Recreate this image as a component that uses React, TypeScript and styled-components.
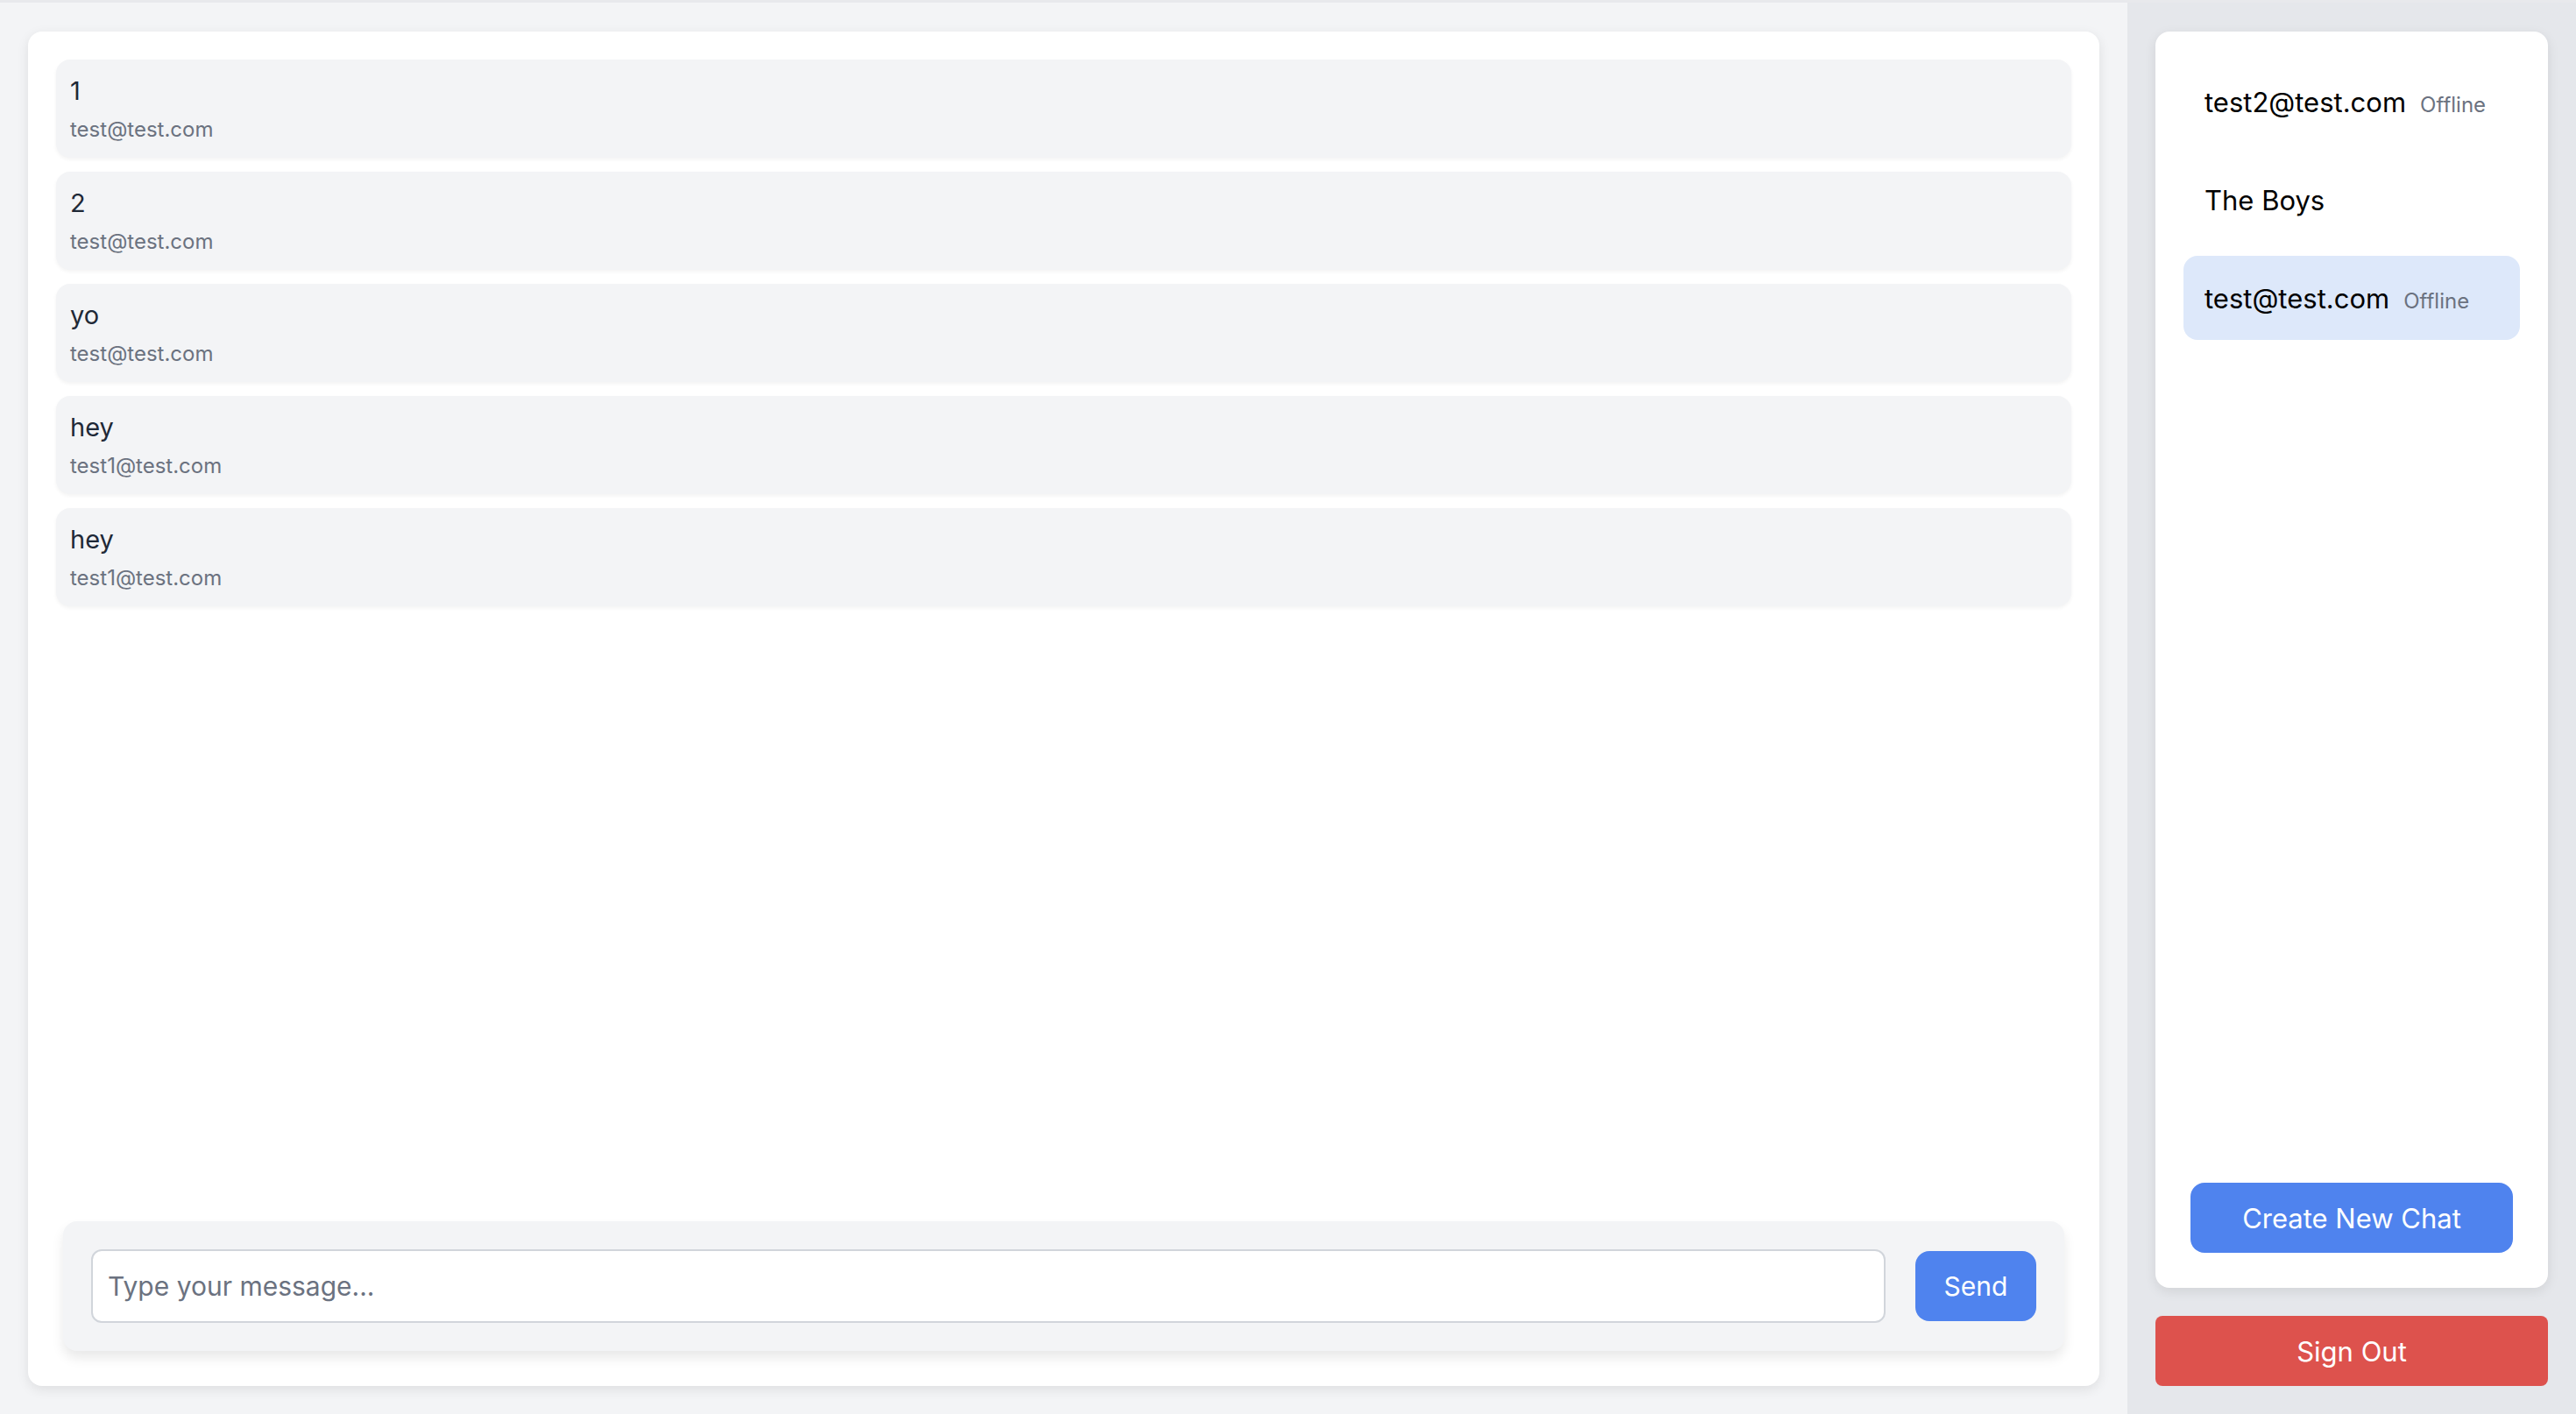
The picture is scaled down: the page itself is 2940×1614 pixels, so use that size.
import React from "react";
import { createGlobalStyle, styled } from "styled-components";

const GlobalStyle = createGlobalStyle`
  html, body {
    margin: 0;
    padding: 0;
  }
  body {
    font-family: Inter, "Noto Sans", "Liberation Sans", sans-serif;
    background-color: #f3f4f6;
  }
  * {
    box-sizing: border-box;
  }
`;

const Layout = styled.div`
  border-top: 3px solid #e8e9ec;
  display: flex;
  height: 100vh;
  width: 100vw;
`;

const MainArea = styled.main`
  background-color: #f3f4f6;
  display: flex;
  flex: 1;
  padding: 33px 32px 32px;
`;

const ChatCard = styled.section`
  background-color: #ffffff;
  border-radius: 16px;
  box-shadow: 0 4px 14px rgba(0, 0, 0, 0.09);
  display: flex;
  flex: 1;
  flex-direction: column;
  padding: 32px;
`;

const MessageList = styled.div`
  display: flex;
  flex: 1;
  flex-direction: column;
  gap: 16px;
`;

const MessageItem = styled.div`
  background-color: #f3f4f6;
  border-radius: 16px;
  box-shadow: 0 2px 4px rgba(0, 0, 0, 0.05);
  display: flex;
  flex-direction: column;
  padding: 16px;
`;

const MessageText = styled.span`
  color: #1f2937;
  font-size: 29px;
  line-height: 40px;
`;

const MessageSender = styled.span`
  color: #6b7280;
  font-size: 24px;
  line-height: 32px;
  margin-top: 8px;
`;

const Composer = styled.form`
  align-items: center;
  background-color: #f3f4f6;
  border-radius: 16px;
  box-shadow: 0 8px 14px rgba(0, 0, 0, 0.09);
  display: flex;
  gap: 34px;
  margin: 8px;
  padding: 32px;
`;

const MessageInput = styled.input`
  background-color: #ffffff;
  border: 2px solid #d1d5db;
  border-radius: 12px;
  color: #1f2937;
  flex: 1;
  font-family: inherit;
  font-size: 30px;
  height: 84px;
  outline: none;
  padding: 0 17px;

  &::placeholder {
    color: #6b7280;
  }
`;

const Button = styled.button<{ $tone: "blue" | "red"; $radius?: number }>`
  background-color: ${(p) => (p.$tone === "blue" ? "#4f83ee" : "#dd524d")};
  border: none;
  border-radius: ${(p) => p.$radius ?? 16}px;
  color: #ffffff;
  cursor: pointer;
  font-family: inherit;
  font-size: 31px;
  height: 80px;
`;

const SendButton = styled(Button)`
  font-size: 30px;
  width: 138px;
`;

const Sidebar = styled.aside`
  background-color: #e5e7eb;
  display: flex;
  flex-direction: column;
  gap: 32px;
  padding: 33px 32px 32px;
  width: 512px;
`;

const ChatListCard = styled.div`
  background-color: #ffffff;
  border-radius: 16px;
  box-shadow: 0 4px 14px rgba(0, 0, 0, 0.09);
  display: flex;
  flex: 1;
  flex-direction: column;
  padding: 32px;
`;

const ChatList = styled.div`
  display: flex;
  flex: 1;
  flex-direction: column;
  gap: 16px;
`;

const ChatRow = styled.div<{ $active?: boolean }>`
  align-items: baseline;
  background-color: ${(p) => (p.$active ? "#dde8fa" : "transparent")};
  border-radius: 16px;
  display: flex;
  gap: 16px;
  height: 96px;
  padding: 30px 24px 0;
`;

const ChatName = styled.span`
  color: #000000;
  font-size: 31px;
`;

const ChatStatus = styled.span`
  color: #6b7280;
  font-size: 24px;
`;

const CreateButton = styled(Button)`
  margin: 8px;
`;

const messages = [
  { text: "1", sender: "test@test.com" },
  { text: "2", sender: "test@test.com" },
  { text: "yo", sender: "test@test.com" },
  { text: "hey", sender: "test1@test.com" },
  { text: "hey", sender: "test1@test.com" },
];

const chats = [
  { name: "test2@test.com", status: "Offline" },
  { name: "The Boys" },
  { name: "test@test.com", status: "Offline", active: true },
];

function App() {
  return (
    <>
      <GlobalStyle />
      <Layout>
        <MainArea>
          <ChatCard>
            <MessageList>
              {messages.map((m, i) => (
                <MessageItem key={i}>
                  <MessageText>{m.text}</MessageText>
                  <MessageSender>{m.sender}</MessageSender>
                </MessageItem>
              ))}
            </MessageList>
            <Composer onSubmit={(e) => e.preventDefault()}>
              <MessageInput placeholder="Type your message..." />
              <SendButton $tone="blue">Send</SendButton>
            </Composer>
          </ChatCard>
        </MainArea>
        <Sidebar>
          <ChatListCard>
            <ChatList>
              {chats.map((c) => (
                <ChatRow key={c.name} $active={c.active}>
                  <ChatName>{c.name}</ChatName>
                  {c.status && <ChatStatus>{c.status}</ChatStatus>}
                </ChatRow>
              ))}
            </ChatList>
            <CreateButton $tone="blue">Create New Chat</CreateButton>
          </ChatListCard>
          <Button $tone="red" $radius={8}>
            Sign Out
          </Button>
        </Sidebar>
      </Layout>
    </>
  );
}

export default App;
